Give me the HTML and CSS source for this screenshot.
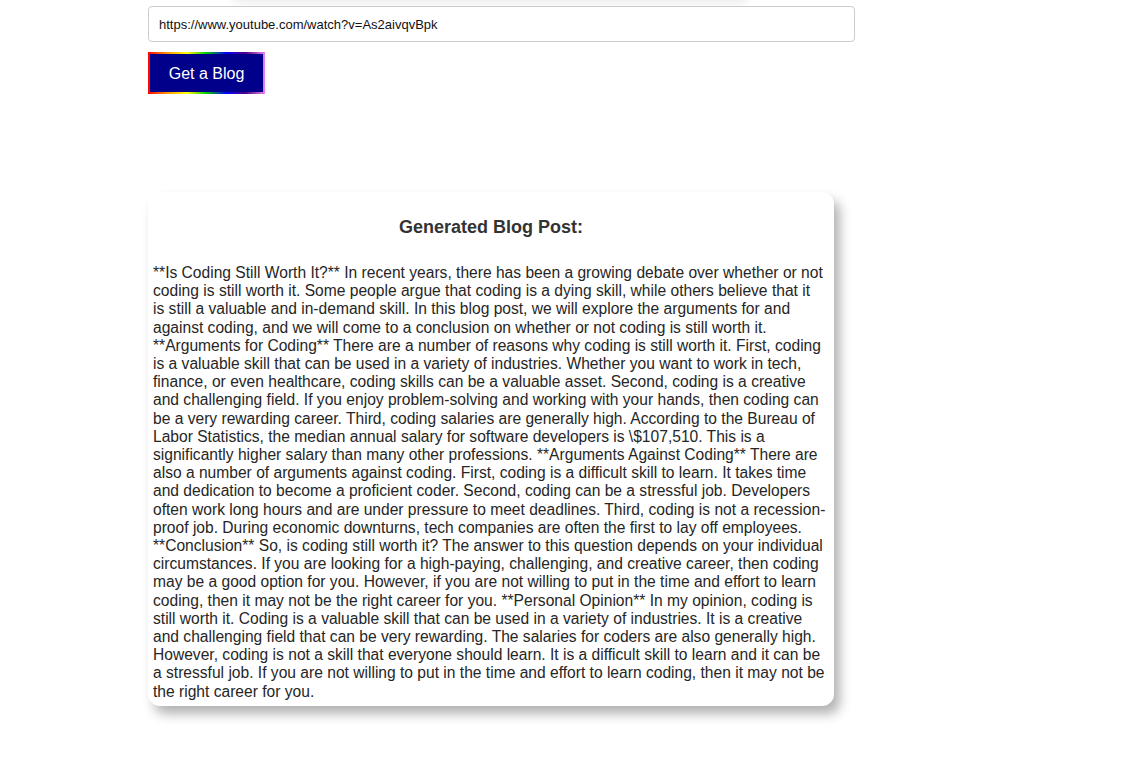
FILE: index.html
```html
<!DOCTYPE html>
<html lang="en">
<head>
<meta charset="utf-8">
<title>Blog Generator</title>
<link rel="stylesheet" href="styles.css">
</head>
<body>
<div class="page">
  <div class="top-shadow"></div>
  <form class="form">
    <input class="url-input" type="text" value="https://www.youtube.com/watch?v=As2aivqvBpk">
    <button class="btn" type="button">Get a Blog</button>
  </form>
  <section class="card">
    <h2 class="card-title">Generated Blog Post:</h2>
    <p class="card-text">**Is Coding Still Worth It?** In recent years, there has been a growing debate over whether or not
coding is still worth it. Some people argue that coding is a dying skill, while others believe that it
is still a valuable and in-demand skill. In this blog post, we will explore the arguments for and
against coding, and we will come to a conclusion on whether or not coding is still worth it.
**Arguments for Coding** There are a number of reasons why coding is still worth it. First, coding
is a valuable skill that can be used in a variety of industries. Whether you want to work in tech,
finance, or even healthcare, coding skills can be a valuable asset. Second, coding is a creative
and challenging field. If you enjoy problem-solving and working with your hands, then coding can
be a very rewarding career. Third, coding salaries are generally high. According to the Bureau of
Labor Statistics, the median annual salary for software developers is \$107,510. This is a
significantly higher salary than many other professions. **Arguments Against Coding** There are
also a number of arguments against coding. First, coding is a difficult skill to learn. It takes time
and dedication to become a proficient coder. Second, coding can be a stressful job. Developers
often work long hours and are under pressure to meet deadlines. Third, coding is not a recession-
proof job. During economic downturns, tech companies are often the first to lay off employees.
**Conclusion** So, is coding still worth it? The answer to this question depends on your individual
circumstances. If you are looking for a high-paying, challenging, and creative career, then coding
may be a good option for you. However, if you are not willing to put in the time and effort to learn
coding, then it may not be the right career for you. **Personal Opinion** In my opinion, coding is
still worth it. Coding is a valuable skill that can be used in a variety of industries. It is a creative
and challenging field that can be very rewarding. The salaries for coders are also generally high.
However, coding is not a skill that everyone should learn. It is a difficult skill to learn and it can be
a stressful job. If you are not willing to put in the time and effort to learn coding, then it may not be
the right career for you.</p>
  </section>
</div>
</body>
</html>
```
FILE: styles.css
```css
html, body {
  margin: 0;
  padding: 0;
  background: #ffffff;
}

body {
  font-family: "Liberation Sans", Arial, Helvetica, sans-serif;
  color: #333333;
}

.page {
  padding: 0 0 40px 148px;
  overflow: hidden;
}

.top-shadow {
  width: 520px;
  height: 20px;
  margin: -20px 0 0 82px;
  border-radius: 10px;
  box-shadow: 0 3px 10px rgba(0, 0, 0, 0.08);
}

.form {
  display: flex;
  flex-direction: column;
  align-items: flex-start;
  gap: 10px;
  margin-top: 6px;
}

.url-input {
  box-sizing: border-box;
  width: 707px;
  height: 36px;
  padding: 0 10px;
  border: 1px solid #cccccc;
  border-radius: 4px;
  font-family: "Liberation Sans", Arial, sans-serif;
  font-size: 13px;
  color: #111111;
  background: #ffffff;
  outline: none;
}

.btn {
  box-sizing: border-box;
  width: 117px;
  height: 42px;
  padding: 1px 0 0 0;
  border: 2px solid transparent;
  background:
    linear-gradient(#00008b, #00008b) padding-box,
    linear-gradient(to right, #ff0000, #ff9900, #ffff00, #00cc00, #0000ff, #4b0082, #ee82ee) border-box;
  color: #ffffff;
  font-family: "Liberation Sans", Arial, sans-serif;
  font-size: 16px;
  cursor: pointer;
}

.card {
  box-sizing: border-box;
  width: 686px;
  margin-top: 98px;
  padding: 25px 5px 5px 5px;
  background: #ffffff;
  border-radius: 12px;
  box-shadow: 6px 8px 12px rgba(0, 0, 0, 0.3);
}

.card-title {
  margin: 0 0 26px 0;
  text-align: center;
  font-size: 18px;
  line-height: 21px;
  font-weight: bold;
  color: #333333;
}

.card-text {
  margin: 0;
  white-space: pre-line;
  font-size: 15.6px;
  line-height: 18.2px;
  color: #262626;
}
```
